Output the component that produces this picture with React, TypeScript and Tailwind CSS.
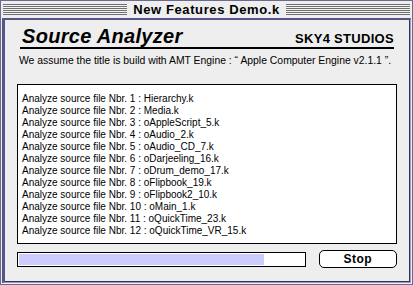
const files = [
  "Hierarchy.k",
  "Media.k",
  "oAppleScript_5.k",
  "oAudio_2.k",
  "oAudio_CD_7.k",
  "oDarjeeling_16.k",
  "oDrum_demo_17.k",
  "oFlipbook_19.k",
  "oFlipbook2_10.k",
  "oMain_1.k",
  "oQuickTime_23.k",
  "oQuickTime_VR_15.k",
];

const Stripes = () => (
  <div className="flex-1 h-[11px] bg-[repeating-linear-gradient(to_bottom,#6f6f6f_0px,#6f6f6f_1px,#f4f4f4_1px,#f4f4f4_2px)]" />
);

export default function App() {
  return (
    <div className="w-[413px] h-[285px] bg-[#eeeeee] border border-[#6b6b8f] flex flex-col font-['Liberation_Sans',sans-serif] text-black">
      {/* title bar */}
      <div className="h-[17px] flex items-center gap-[6px] px-[2px] bg-[#eeeeee]">
        <Stripes />
        <span className="text-[13px] font-bold tracking-[0.6px] leading-none">New Features Demo.k</span>
        <Stripes />
      </div>

      {/* window body */}
      <div className="flex-1 mx-[1px] mb-[1px] border border-[#9999cc] border-l-[3px] border-l-[#555588] border-t-[2px] border-t-[#555588]">
        <div className="h-full border-r border-b border-[#333355] px-[12px] pt-[8px] flex flex-col">
          <div className="h-[21px] flex items-end justify-between border-b-2 border-black mx-[3px]">
            <span className="text-[20px] font-black italic leading-none pl-[2px] pb-[1px] tracking-[0.3px]">Source Analyzer</span>
            <span className="text-[13px] font-black leading-none pb-[2px] tracking-[0.3px]">SKY4 STUDIOS</span>
          </div>
          <p className="text-[10.4px] mt-[7px] ml-[2px] leading-none">
            We assume the title is build with AMT Engine : “ Apple Computer Engine v2.1.1 ”.
          </p>
          <div className="mt-[18px] h-[160px] shrink-0 bg-white border border-black pt-[8px] pl-[4px] flex flex-col">
            {files.map((f, i) => (
              <div key={f} className="text-[10px] leading-[12px] h-[12px]">
                Analyze source file Nbr. {i + 1} : {f}
              </div>
            ))}
          </div>
          <div className="flex items-center gap-[13px] mt-[6px]">
            <div className="w-[291px] h-[15px] border border-black bg-white p-[1px]">
              <div className="h-full w-[86%] bg-[#ccccff]" />
            </div>
            <button className="w-[79px] h-[18px] border border-black rounded-[5px] bg-white text-[12px] font-bold leading-none tracking-[0.5px]">
              Stop
            </button>
          </div>
        </div>
      </div>
    </div>
  );
}
